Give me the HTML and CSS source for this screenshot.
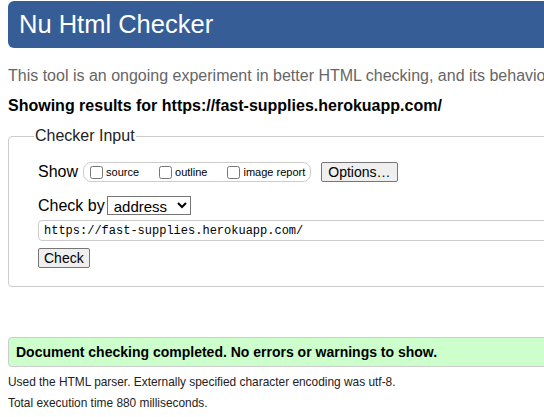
FILE: index.html
```html
<!DOCTYPE html>
<html>
<head>
<meta charset="utf-8">
<link rel="stylesheet" href="styles.css">
</head>
<body>
<div class="page">
  <h1 class="banner">Nu Html Checker</h1>
  <p class="intro">This tool is an ongoing experiment in better HTML checking, and its behavior remains subject to change</p>
  <p class="showing">Showing results for https://fast-supplies.herokuapp.com/</p>
  <fieldset class="checker">
    <legend class="legend">Checker Input</legend>
    <div class="row show-row">
      <span class="label">Show</span>
      <span class="pill">
        <label class="opt"><input type="checkbox" class="cb">source</label>
        <label class="opt"><input type="checkbox" class="cb">outline</label>
        <label class="opt"><input type="checkbox" class="cb">image report</label>
      </span>
      <button class="btn options">Options…</button>
    </div>
    <div class="row by-row">
      <span class="label">Check by</span>
      <select class="select"><option>address</option></select>
    </div>
    <input class="url" type="text" value="https://fast-supplies.herokuapp.com/">
    <div class="row">
      <button class="btn check">Check</button>
    </div>
  </fieldset>
  <p class="success">Document checking completed. No errors or warnings to show.</p>
  <p class="details">Used the HTML parser. Externally specified character encoding was utf-8.</p>
  <p class="details">Total execution time 880 milliseconds.</p>
</div>
</body>
</html>
```
FILE: styles.css
```css
html { overflow: hidden; }
body {
  margin: 0;
  background: #fff;
  font-family: "Liberation Sans", Arial, sans-serif;
  color: #000;
}
.page {
  width: 900px;
  padding: 1px 8px 0;
}
.banner {
  margin: 0;
  background: #365d95;
  color: #fff;
  font-weight: normal;
  font-size: 25.5px;
  line-height: 47px;
  height: 47px;
  padding: 0 11px;
  border-radius: 6px;
}
.intro {
  margin: 18px 0 0;
  color: #666;
  font-size: 16px;
  line-height: 20px;
  white-space: nowrap;
}
.showing {
  margin: 10px 0 0;
  font-weight: bold;
  font-size: 16px;
  line-height: 20px;
  white-space: nowrap;
}
.checker {
  margin: 11px 0 0;
  padding: 17px 28px 18px 29px;
  border: 1px solid #ccc;
  border-radius: 4px;
}
.legend {
  font-size: 16px;
  padding: 0 1px;
  margin-left: -4px;
  color: #222;
}
.row {
  display: flex;
  align-items: center;
}
.label {
  font-size: 16px;
}
.show-row { height: 20px; }
.pill {
  display: inline-flex;
  align-items: center;
  margin-left: 5px;
  height: 18px;
  border: 1px solid #ccc;
  border-radius: 8px;
  padding: 0 5px 0 6px;
}
.opt {
  display: inline-flex;
  align-items: center;
  font-size: 11px;
  margin-right: 20px;
}
.opt:last-child { margin-right: 0; }
.cb {
  width: 13px;
  height: 13px;
  margin: 0 3px 0 0;
}
.btn {
  font-family: "Liberation Sans", Arial, sans-serif;
  font-size: 14px;
  background: #efefef;
  border: 1px solid #767676;
  border-radius: 2px;
  color: #000;
  height: 20px;
  padding: 0 6px;
}
.options { margin-left: 10px; }
.by-row { margin-top: 14px; }
.select {
  margin-left: 2px;
  font-family: "Liberation Sans", Arial, sans-serif;
  font-size: 15px;
  height: 19px;
  width: 84px;
  border: 1px solid #767676;
  background: #fff;
  padding: 0 2px;
}
.url {
  display: block;
  box-sizing: border-box;
  width: 800px;
  height: 21px;
  margin-top: 5px;
  border: 1px solid #ccc;
  border-radius: 4px;
  padding: 0 5px;
  font-family: "Liberation Mono", "Courier New", monospace;
  font-size: 12px;
  color: #000;
}
.check { margin-top: 7px; font-size: 14px; padding: 0 5px; }
.success {
  margin: 50px 0 0;
  background: #ccffcc;
  border: 1px solid #ccc;
  border-radius: 4px;
  padding: 0 7px;
  height: 28px;
  line-height: 28px;
  font-weight: bold;
  font-size: 14px;
}
.details {
  margin: 8px 0 0;
  font-size: 11.9px;
  line-height: 15px;
  color: #222;
}
.details + .details { margin-top: 6px; }
```
